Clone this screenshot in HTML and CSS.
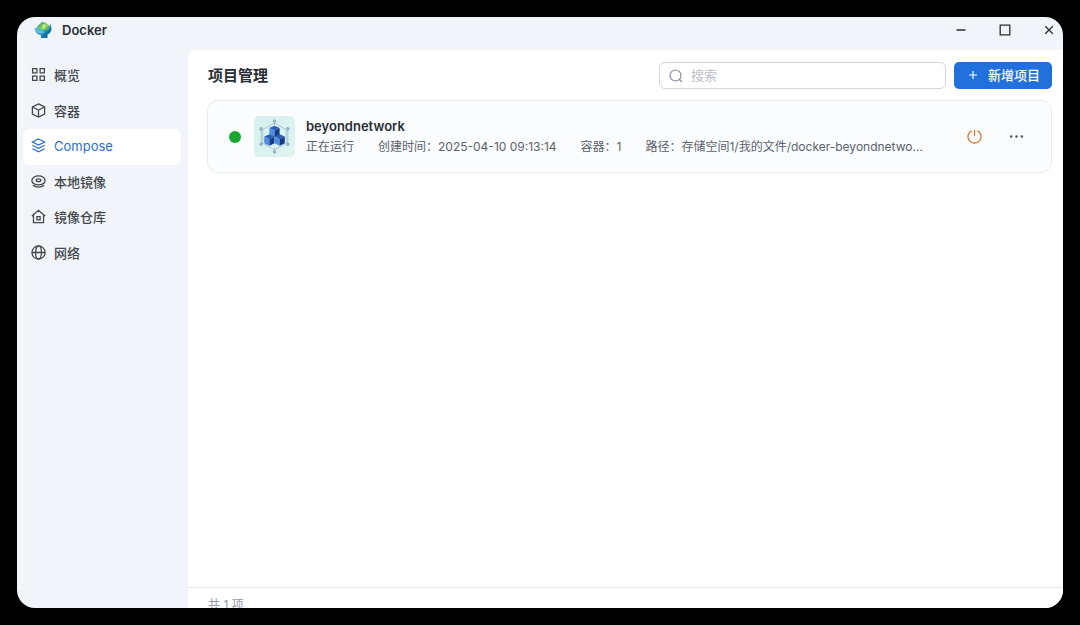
FILE: index.html
```html
<!DOCTYPE html>
<html lang="zh-CN">
<head>
<meta charset="utf-8">
<title>Docker</title>
<link rel="stylesheet" href="styles.css">
</head>
<body>
<div class="window">
  <header class="titlebar">
    <svg class="app-logo" viewBox="0 0 18 18" aria-hidden="true">
      <defs>
        <linearGradient id="whale" x1="0" y1="0" x2="1" y2="1"><stop offset="0" stop-color="#7fd4ee"/><stop offset=".5" stop-color="#1c8fb8"/><stop offset="1" stop-color="#12518f"/></linearGradient>
        <linearGradient id="leaf" x1="0" y1="0" x2="1" y2="1"><stop offset="0" stop-color="#2d9a74"/><stop offset=".6" stop-color="#8bd46a"/><stop offset="1" stop-color="#2b8f8c"/></linearGradient>
      </defs>
      <path d="M.5 7.500 4 6h11l1.500-3.500L17.500 8c0 3-2 4.500-4 5.500V17H7v-3C4 13.500 1.500 12 .5 7.500z" fill="url(#whale)"/>
      <path d="M3.500 5 8 1l3 .5 4 2.500v4.500L12.500 10 9 9 4 8z" fill="url(#leaf)"/>
      <path d="m9 3 3 1-1 3-3 1z" fill="#c5ed72"/>
      <path d="M1 8 8 9l3 2-3 2-4-1z" fill="#61c9e8" opacity=".8"/>
    </svg>
    <h1 class="app-name">Docker</h1>
    <div class="window-controls">
      <button class="window-button" type="button" aria-label="最小化"><svg viewBox="0 0 12 12"><path d="M1.500 6h9"/></svg></button>
      <button class="window-button" type="button" aria-label="最大化"><svg viewBox="0 0 12 12"><path d="M1.200 1.200h9.600v9.600H1.200z"/></svg></button>
      <button class="window-button" type="button" aria-label="关闭"><svg viewBox="0 0 12 12"><path d="m2.200 2.200 7.600 7.600m0-7.600-7.600 7.600"/></svg></button>
    </div>
  </header>

  <nav class="sidebar" aria-label="导航">
    <a class="nav-item" href="#overview"><svg class="nav-icon" viewBox="0 0 14 14"><path d="M1.500 1.500h4v4h-4zM8.500 1.500h4v4h-4zM1.500 8.500h4v4h-4zM8.500 8.500h4v4h-4z"/></svg>概览</a>
    <a class="nav-item" href="#containers"><svg class="nav-icon" viewBox="0 0 14 14"><path d="m7 .8 5.700 2.900v6.600L7 13.200 1.300 10.300V3.700zM1.300 3.700 7 6.500l5.700-2.800M7 6.500v6.700"/></svg>容器</a>
    <a class="nav-item nav-item-active" href="#compose" aria-current="page"><svg class="nav-icon" viewBox="0 0 14 14"><path d="m7 .9 5.700 2.800L7 6.500 1.300 3.700zM1.300 6.800 7 9.700l5.700-2.900M1.300 10 7 12.900l5.700-2.900"/></svg>Compose</a>
    <a class="nav-item" href="#images"><svg class="nav-icon" viewBox="0 0 14 14"><ellipse cx="7" cy="6" rx="6.200" ry="4.200"/><ellipse cx="7" cy="5.800" rx="2.200" ry="1.300"/><path d="M1.800 10.500c2.700 2.300 7.700 2.300 10.400 0"/></svg>本地镜像</a>
    <a class="nav-item" href="#registry"><svg class="nav-icon" viewBox="0 0 14 14"><path d="M.8 6.500 7 1.200l6.200 5.300M2.300 5.500v7.200h9.400V5.500M5.500 7.200h3v3h-3z"/></svg>镜像仓库</a>
    <a class="nav-item" href="#network"><svg class="nav-icon" viewBox="0 0 14 14"><circle cx="7" cy="7" r="6.100"/><ellipse cx="7" cy="7" rx="2.700" ry="6.100"/><path d="M.9 7h12.200"/></svg>网络</a>
  </nav>

  <main class="content">
    <div class="toolbar">
      <h2 class="page-title">项目管理</h2>
      <label class="search">
        <svg class="search-icon" viewBox="0 0 14 14"><circle cx="6.500" cy="6.500" r="5.500"/><path d="m10.500 10.500 2.700 2.700"/></svg>
        <input class="search-input" type="search" placeholder="搜索" aria-label="搜索">
      </label>
      <button class="add-button" type="button"><svg class="add-icon" viewBox="0 0 10 10"><path d="M5 1v8M1 5h8"/></svg>新增项目</button>
    </div>

    <section class="projects">
      <article class="project">
        <span class="status-dot" role="img" aria-label="正在运行"></span>
        <svg class="project-logo" viewBox="0 0 40 40" aria-hidden="true">
          <defs><linearGradient id="tile" x1="0" y1="0" x2="1" y2="1"><stop offset="0" stop-color="#d5f1ef"/><stop offset="1" stop-color="#e0f3ef"/></linearGradient></defs>
          <rect width="40" height="40" rx="5" fill="url(#tile)"/>
          <g fill="none" stroke="#8fabc4" stroke-width=".6">
            <path d="m20 7 11.500 6.500v13L20 33 8.500 26.500v-13zM20 5v4M20 31v4M7 13v14M33 13v14"/>
          </g>
          <g fill="#b4cce2" stroke="#7492b2" stroke-width=".8">
            <circle cx="20" cy="5" r="1.200"/><circle cx="20" cy="35" r="1.200"/><circle cx="7" cy="12.500" r="1.200"/><circle cx="33" cy="12.500" r="1.200"/><circle cx="7" cy="27.500" r="1.200"/><circle cx="33" cy="27.500" r="1.200"/>
          </g>
          <g id="cube"><path d="m20 9.500 5 2.300-5 2.600-5-2.600z" fill="#2f5fb4"/><path d="m15 11.800 5 2.600v6.400l-5-2.600z" fill="#4b8de4"/><path d="m25 11.800-5 2.600v6.400l5-2.600z" fill="#173a82"/></g>
          <use href="#cube" x="-5" y="8.300"/><use href="#cube" x="5" y="8.300"/>
        </svg>
        <div class="project-info">
          <h3 class="project-name">beyondnetwork</h3>
          <div class="project-meta">
            <span>正在运行</span>
            <span>创建时间：2025-04-10 09:13:14</span>
            <span>容器：1</span>
            <span>路径：存储空间1/我的文件/docker-beyondnetwo…</span>
          </div>
        </div>
        <div class="project-actions">
          <button class="icon-button power" type="button" aria-label="停止"><svg viewBox="0 0 14 14"><path d="M7 .8v6M4.300 1.500a6.100 6.100 0 1 0 5.400 0"/></svg></button>
          <button class="icon-button more" type="button" aria-label="更多"><svg viewBox="0 0 14 14"><circle cx="2" cy="7" r="1.100"/><circle cx="7" cy="7" r="1.100"/><circle cx="12" cy="7" r="1.100"/></svg></button>
        </div>
      </article>
    </section>

    <footer class="summary">共 1 项</footer>
  </main>
</div>
</body>
</html>
```
FILE: styles.css
```css
* {
  box-sizing: border-box;
}

body {
  margin: 0;
  padding: 17px;
  height: 100vh;
  background: #000;
  color: #2a2e35;
  font-family: Inter, "Noto Sans CJK SC", sans-serif;
  font-size: 13px;
}

h1, h2, h3 {
  margin: 0;
}

button {
  padding: 0;
  border: 0;
  background: none;
  font: inherit;
}

svg {
  display: block;
  flex: none;
  fill: none;
  stroke: currentColor;
}

.app-logo,
.project-logo {
  stroke: none;
}

.window {
  display: grid;
  grid-template: 33px minmax(0, 1fr) / 171px minmax(0, 1fr);
  height: 100%;
  border-radius: 18px;
  background: #f1f4f9;
  overflow: hidden;
}

.titlebar {
  grid-column: 1 / -1;
  display: flex;
  align-items: center;
  gap: 10px;
  height: 25px;
  padding: 0 7px 0 17px;
}

.app-logo {
  width: 18px;
  height: 18px;
}

.app-name {
  font-size: 13px;
  font-weight: 600;
}

.window-controls {
  display: flex;
  gap: 30px;
  margin-left: auto;
}

.window-button {
  width: 14px;
  height: 14px;
  padding: 1px;
  color: #2a2e35;
}

.window-button svg {
  stroke-width: 1.3;
}

.sidebar {
  display: flex;
  flex-direction: column;
  height: 221px;
  padding: 8px 7px 0 6px;
}

.nav-item {
  flex: 1;
  display: flex;
  align-items: center;
  gap: 8px;
  padding: 0 8px 2px;
  border-radius: 6px;
  color: #44484e;
  font-weight: 500;
  text-decoration: none;
}

.nav-item-active {
  background: #fff;
  color: #2b6fd0;
  font-weight: 400;
}

.nav-icon {
  width: 15px;
  height: 15px;
  stroke-width: 1.2;
}

.content {
  display: flex;
  flex-direction: column;
  border-top-left-radius: 8px;
  background: #fff;
}

.toolbar {
  display: flex;
  align-items: center;
  gap: 8px;
  padding: 12px 11px 11px 20px;
}

.page-title {
  margin-right: auto;
  font-size: 15px;
  font-weight: 600;
  line-height: 20px;
}

.search {
  display: flex;
  align-items: center;
  gap: 8px;
  width: 34%;
  height: 27px;
  padding: 0 9px;
  border: 1px solid #d2d6dc;
  border-radius: 6px;
}

.search-icon {
  width: 14px;
  height: 14px;
  color: #858c9b;
  stroke-width: 1.2;
}

.search-input {
  flex: 1;
  min-width: 0;
  padding: 0 0 2px;
  border: 0;
  outline: 0;
  background: none;
  font: inherit;
}

.search-input::placeholder {
  color: #bbc0c7;
}

.add-button {
  display: flex;
  align-items: center;
  gap: 10px;
  height: 27px;
  padding: 0 12px 2px 14px;
  border-radius: 5px;
  background: #2170dc;
  color: #fff;
  font-weight: 500;
}

.add-icon {
  width: 10px;
  height: 10px;
  stroke-width: 1.2;
}

.projects {
  flex: 1;
  padding: 0 11px 0 19px;
}

.project {
  display: flex;
  align-items: center;
  height: 73px;
  padding: 0 27px 0 21px;
  border: 1px solid #e7ebef;
  border-radius: 11px;
  background: #fafcfe;
}

.status-dot {
  flex: none;
  width: 12px;
  height: 12px;
  border-radius: 50%;
  background: #1ba532;
}

.project-logo {
  width: 41px;
  height: 41px;
  margin: 0 11px 0 13px;
}

.project-info {
  flex: 1;
  min-width: 0;
}

.project-name {
  font-size: 13px;
  font-weight: 600;
  line-height: 20px;
}

.project-meta {
  display: flex;
  gap: 24px;
  color: #5b626c;
  font-size: 12px;
  line-height: 21px;
  white-space: nowrap;
}

.project-actions {
  display: flex;
  gap: 27px;
  margin-left: 24px;
}

.icon-button {
  width: 15px;
  height: 15px;
}

.power {
  color: #df7636;
}

.power svg {
  stroke-width: 1.2;
}

.more {
  color: #484d55;
}

.more svg {
  fill: currentColor;
  stroke: none;
}

.summary {
  height: 36px;
  margin-bottom: -15px;
  padding-left: 20px;
  border-top: 1px solid #e4e7eb;
  color: #9298a8;
  font-size: 12px;
  line-height: 34px;
}
```
